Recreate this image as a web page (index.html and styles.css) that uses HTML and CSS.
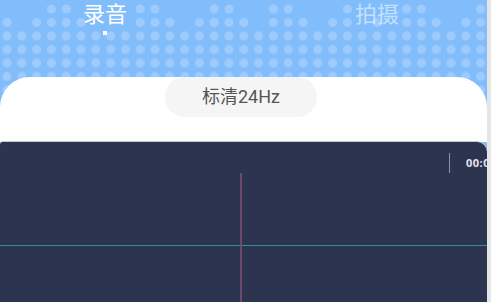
FILE: index.html
```html
<html>
  <head>
    <title>录音</title>
    <link rel="stylesheet" href="styles.css">
  </head>
  <body>
    <div class="app">
      <div class="header">
        <svg class="dots" width="487" height="110" viewBox="0 0 487 110">
          <defs>
            <pattern id="dotGrid" width="14.8" height="13.5" patternUnits="userSpaceOnUse" x="-0.4" y="29.25">
              <circle cx="7.4" cy="6.75" r="4.5" fill="#9ecbfc" />
            </pattern>
          </defs>
          <rect x="0" y="29.25" width="487" height="81" fill="url(#dotGrid)" />
          <g fill="#9ecbfc">
            <circle cx="51.4" cy="9" r="4.5" />
            <circle cx="66.2" cy="9" r="4.5" />
            <circle cx="140.2" cy="9" r="4.5" />
            <circle cx="155" cy="9" r="4.5" />
            <circle cx="214.2" cy="9" r="4.5" />
            <circle cx="229" cy="9" r="4.5" />
            <circle cx="273.4" cy="9" r="4.5" />
            <circle cx="288.2" cy="9" r="4.5" />
            <circle cx="347.4" cy="9" r="4.5" />
            <circle cx="406.6" cy="9" r="4.5" />
            <circle cx="421.4" cy="9" r="4.5" />
            <circle cx="480.6" cy="9" r="4.5" />

            <circle cx="7" cy="22.5" r="4.5" />
            <circle cx="36.6" cy="22.5" r="4.5" />
            <circle cx="51.4" cy="22.5" r="4.5" />
            <circle cx="66.2" cy="22.5" r="4.5" />
            <circle cx="81" cy="22.5" r="4.5" />
            <circle cx="140.2" cy="22.5" r="4.5" />
            <circle cx="155" cy="22.5" r="4.5" />
            <circle cx="169.8" cy="22.5" r="4.5" />
            <circle cx="199.4" cy="22.5" r="4.5" />
            <circle cx="214.2" cy="22.5" r="4.5" />
            <circle cx="229" cy="22.5" r="4.5" />
            <circle cx="243.8" cy="22.5" r="4.5" />
            <circle cx="273.4" cy="22.5" r="4.5" />
            <circle cx="288.2" cy="22.5" r="4.5" />
            <circle cx="303" cy="22.5" r="4.5" />
            <circle cx="332.6" cy="22.5" r="4.5" />
            <circle cx="347.4" cy="22.5" r="4.5" />
            <circle cx="377" cy="22.5" r="4.5" />
            <circle cx="406.6" cy="22.5" r="4.5" />
            <circle cx="421.4" cy="22.5" r="4.5" />
            <circle cx="436.2" cy="22.5" r="4.5" />
            <circle cx="465.8" cy="22.5" r="4.5" />
            <circle cx="480.6" cy="22.5" r="4.5" />
          </g>
        </svg>
        <div class="tabs">
          <div class="tab active">
            <span class="tab-label">录音</span>
            <span class="tab-dot"></span>
          </div>
          <div class="tab">
            <span class="tab-label">拍摄</span>
          </div>
        </div>
      </div>

      <div class="card">
        <div class="quality">标清24Hz</div>
      </div>

      <div class="wave">
        <div class="time-row">
          <span class="time">00:00:00</span>
        </div>
        <div class="center-line"></div>
        <div class="playhead"></div>
      </div>
    </div>
    <div class="scroll-track"></div>
  </body>
</html>
```

FILE: styles.css
```css
html,
body {
  margin: 0;
  width: 491px;
  height: 302px;
  overflow: hidden;
}
body {
  display: flex;
  font-family: Roboto, "Noto Sans CJK SC", sans-serif;
}
.app {
  width: 487px;
  height: 302px;
  background-color: #81bdfb;
  display: flex;
  flex-direction: column;
  overflow: hidden;
}
.scroll-track {
  width: 4px;
  height: 302px;
  background-color: #e6e6e6;
}
.header {
  position: relative;
  height: 77px;
  flex-shrink: 0;
}
.dots {
  position: absolute;
  top: 0;
  left: 0;
}
.tabs {
  position: relative;
  display: flex;
  padding-top: 2px;
  padding-left: 82px;
  gap: 226px;
}
.tab {
  display: flex;
  flex-direction: column;
  align-items: center;
  width: 46px;
}
.tab-label {
  font-family: "Noto Sans CJK SC", sans-serif;
  font-size: 22px;
  line-height: 20px;
  color: rgba(255, 255, 255, 0.55);
}
.tab.active .tab-label {
  color: #ffffff;
}
.tab-dot {
  width: 4px;
  height: 4px;
  margin-top: 9px;
  background-color: #ffffff;
}
.card {
  position: relative;
  height: 65px;
  flex-shrink: 0;
  background-color: #ffffff;
  border-radius: 30px 30px 0 0;
}
.quality {
  width: 152px;
  height: 40px;
  margin-left: 165px;
  border-radius: 20px;
  background-color: #f5f5f5;
  color: #555555;
  font-size: 18px;
  line-height: 40px;
  text-align: center;
}
.wave {
  position: relative;
  flex: 1;
  background-color: #2c3450;
  border-radius: 3px 10px 0 0;
  box-shadow: 0 -1px 0 #c4c6cc;
  overflow: hidden;
}
.time-row {
  height: 20px;
  margin-top: 11px;
  margin-left: 449px;
  padding-left: 16px;
  border-left: 1px solid #8c91a3;
  line-height: 20px;
  white-space: nowrap;
}
.time {
  font-family: "Open Sans", sans-serif;
  font-weight: 700;
  font-size: 11px;
  letter-spacing: 0.5px;
  color: #e4e6ec;
}
.center-line {
  position: absolute;
  left: 0;
  right: 0;
  top: 103px;
  height: 1px;
  background-color: #2a9298;
}
.playhead {
  position: absolute;
  left: 240px;
  top: 31px;
  bottom: 0;
  width: 2px;
  background-color: #6b4b69;
}
```
